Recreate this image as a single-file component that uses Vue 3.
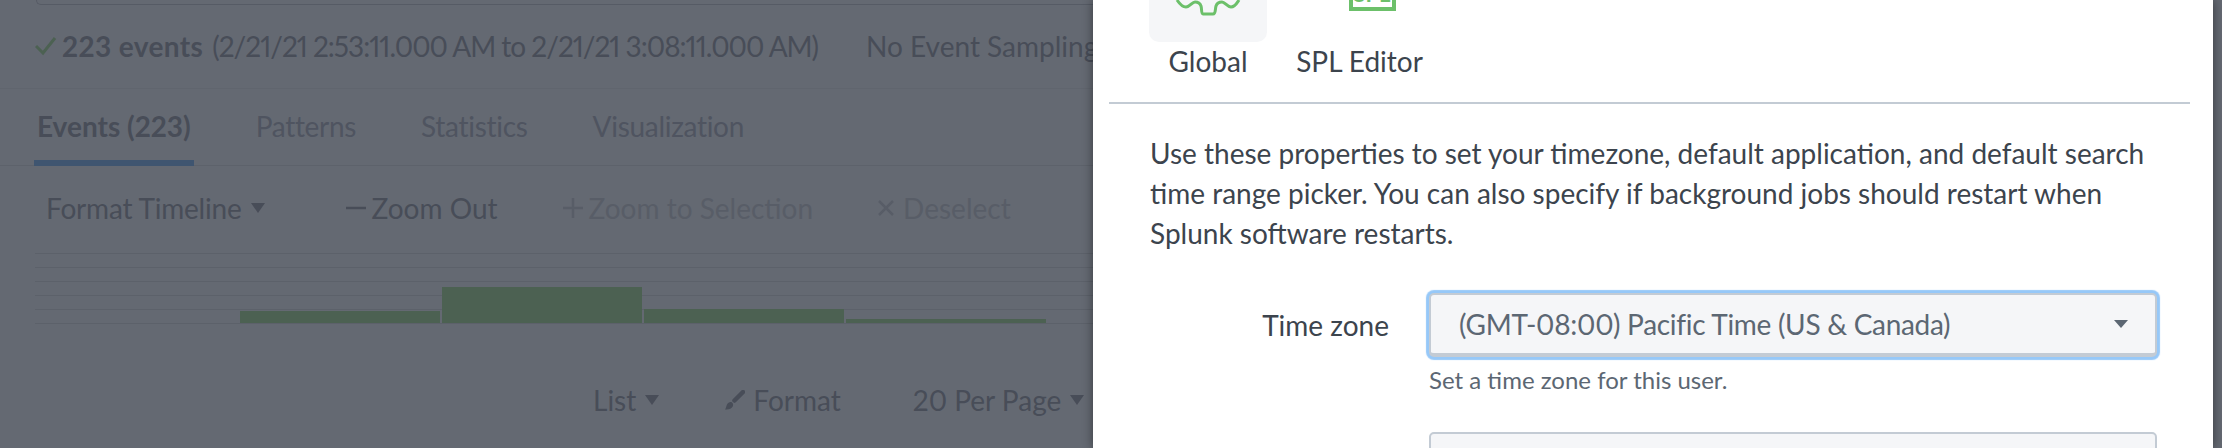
<script setup>
const tabs = [
  { label: 'Events (223)', active: true },
  { label: 'Patterns' },
  { label: 'Statistics' },
  { label: 'Visualization' },
]
// timeline bars, heights in px against the axis
const bars = [12, 36, 14, 4]
const gridlines = [1, 2, 3, 4, 5, 6]
</script>

<template>
  <div class="screen">
    <!-- dimmed search page behind the modal -->
    <div class="page">
      <div class="search-box"></div>

      <div class="status">
        <svg class="check" width="24" height="20" viewBox="0 0 24 20">
          <path d="M1 10l7 7L20 2" fill="none" stroke="#4c6152" stroke-width="3" />
        </svg>
        <span class="count">223 events</span>
        <span class="range">(2/21/21 2:53:11.000 AM to 2/21/21 3:08:11.000 AM)</span>
        <span class="sampling">No Event Sampling</span>
      </div>

      <div class="tabs">
        <div v-for="t in tabs" :key="t.label" class="tab" :class="{ active: t.active }">{{ t.label }}</div>
      </div>

      <div class="toolbar">
        <span class="tool tool-format">Format Timeline<i class="caret"></i></span>
        <span class="tool">
          <svg class="sym" width="20" height="20" viewBox="0 0 20 20"><path d="M0 10h20" stroke="#484d58" stroke-width="2.5" /></svg>
          Zoom Out
        </span>
        <span class="tool off">
          <svg class="sym" width="20" height="20" viewBox="0 0 20 20"><path d="M0 10h20M10 0v20" stroke="#585d67" stroke-width="2.5" /></svg>
          Zoom to Selection
        </span>
        <span class="tool off">
          <svg class="sym sym-x" width="16" height="16" viewBox="0 0 16 16"><path d="M1 1l14 14M15 1L1 15" stroke="#585d67" stroke-width="2.5" /></svg>
          Deselect
        </span>
      </div>

      <div class="timeline">
        <div class="grid">
          <div v-for="g in gridlines" :key="g" class="gridline"></div>
        </div>
        <div class="bars">
          <div v-for="(h, i) in bars" :key="i" class="bar" :style="{ height: h + 'px' }"></div>
        </div>
      </div>

      <div class="results-bar">
        <span class="tool">List<i class="caret"></i></span>
        <span class="tool tool-fmt">
          <svg class="brush" width="20" height="20" viewBox="0 0 20 20">
            <path d="M18 2L9.5 10.5" stroke="#484d58" stroke-width="4.5" stroke-linecap="round" />
            <path d="M0 19.5c1-1 1-3 2-5 1-2 3.500-3 5-2s1.500 3.500 0 5c-2 2-5 2-7 2z" fill="#484d58" />
          </svg>
          Format
        </span>
        <span class="tool">20 Per Page<i class="caret"></i></span>
      </div>
    </div>

    <!-- preferences modal -->
    <div class="modal">
      <div class="pref-tabs">
        <div class="pref-tab">
          <div class="tile">
            <svg width="70" height="18" viewBox="0 0 70 18">
              <path d="M4 0c2 3 5 7 9 7s6-5 9-5 5 1 6 4c1 3 0 8 2 8h10c3 0 2-5 3-8 1-3 3-4 6-4s5 5 9 5 6-4 8-7" fill="none" stroke="#6cc06a" stroke-width="3" />
            </svg>
          </div>
          <span>Global</span>
        </div>
        <div class="pref-tab spl">
          <div class="tile tile-plain">
            <div class="spl-box"><b>SPL</b></div>
          </div>
          <span>SPL Editor</span>
        </div>
      </div>
      <div class="divider"></div>
      <p class="intro">
        Use these properties to set your timezone, default application, and default search
        time range picker. You can also specify if background jobs should restart when
        Splunk software restarts.
      </p>
      <div class="field">
        <label>Time zone</label>
        <div class="control">
          <div class="select">
            <span>(GMT-08:00) Pacific Time (US &amp; Canada)</span>
            <i class="select-caret"></i>
          </div>
          <div class="help">Set a time zone for this user.</div>
          <div class="select next"></div>
        </div>
      </div>
    </div>
  </div>
</template>

<style>
html, body { margin: 0; background: #646972; }
</style>

<style scoped>
.screen {
  position: relative;
  width: 2222px;
  height: 448px;
  overflow: hidden;
  background: #646972;
  font-family: Lato, "Open Sans", sans-serif;
  font-variant-numeric: proportional-nums;
  color: #484d58;
  font-size: 28px;
}

.page {
  width: 1093px;
  white-space: nowrap;
}

.search-box {
  height: 4px;
  margin-left: 36px;
  border: 1px solid #565b65;
  border-top: none;
  border-right: none;
  border-bottom-left-radius: 5px;
}

.status {
  display: flex;
  align-items: center;
  height: 84px;
  padding: 0 0 2px 35px;
  border-bottom: 1px solid #60656e;
  box-sizing: border-box;
}
.check { flex: none; margin-right: 3px; }
.count { font-weight: 700; letter-spacing: 0.4px; margin-right: 9px; }
.range { letter-spacing: -1px; }
.sampling { margin-left: 48px; }

.tabs {
  display: flex;
  gap: 59px;
  height: 77px;
  padding-left: 34px;
  border-bottom: 1px solid #5d626b;
  box-sizing: border-box;
}
.tab {
  height: 77px;
  box-sizing: border-box;
  padding: 19px 3px 0;
  line-height: 36px;
  letter-spacing: -0.3px;
  color: #4f5460;
}
.tab.active {
  font-weight: 700;
  letter-spacing: 0;
  color: #484d58;
  border-bottom: 6px solid #3f5570;
}

.toolbar {
  display: flex;
  align-items: center;
  height: 84px;
  padding-left: 46px;
  gap: 65px;
}
.tool { display: inline-flex; align-items: center; }
.tool.off { color: #585d67; }
.tool-format { letter-spacing: -0.2px; margin-right: 16px; }
.sym { flex: none; margin-right: 6px; }
.sym-x { margin-right: 9px; }

.caret {
  display: inline-block;
  margin-left: 9px;
  border-left: 7px solid transparent;
  border-right: 7px solid transparent;
  border-top: 10px solid #484d58;
}

.timeline {
  position: relative;
  height: 76px;
  margin-left: 35px;
}
.grid {
  display: flex;
  flex-direction: column;
  gap: 13px;
  padding-top: 3px;
}
.gridline { height: 1px; background: #5c616a; }
.bars {
  position: absolute;
  left: 205px;
  top: 0;
  height: 73px;
  display: flex;
  align-items: flex-end;
  gap: 2px;
}
.bar { width: 200px; background: #4c6152; }

.results-bar {
  display: flex;
  align-items: center;
  height: 72px;
  margin-top: 38px;
  padding-left: 593px;
  gap: 64px;
}
.tool-fmt { gap: 8px; margin: 0 8px 0 2px; }

.modal {
  position: absolute;
  left: 1093px;
  top: 0;
  width: 1120px;
  height: 448px;
  background: #fff;
  box-shadow: 0 0 10px rgba(0, 0, 0, 0.45);
  color: #3c444d;
}

.pref-tabs {
  display: flex;
  gap: 30px;
  margin-top: -60px;
  padding-left: 56px;
}
.pref-tab {
  display: flex;
  flex-direction: column;
  align-items: center;
  width: 118px;
  line-height: 38px;
  white-space: nowrap;
}
.pref-tab.spl { width: 125px; }
.tile {
  display: flex;
  align-items: flex-start;
  justify-content: center;
  box-sizing: border-box;
  width: 118px;
  height: 102px;
  padding-top: 60px;
  border-radius: 10px;
  background: #f5f6f8;
}
.tile-plain {
  background: none;
  justify-content: flex-start;
  padding-top: 0;
}
.spl-box {
  box-sizing: border-box;
  width: 47px;
  height: 71px;
  margin-left: 48px;
  border: 4px solid #6cc06a;
  display: flex;
  align-items: flex-end;
  justify-content: center;
  overflow: hidden;
}
.spl-box b {
  font-size: 22px;
  line-height: 18px;
  color: #6cc06a;
  padding-bottom: 4px;
}

.divider {
  height: 2px;
  margin: 22px 23px 0 16px;
  background: #c3cbd4;
}

.intro {
  margin: 29px 40px 0 57px;
  line-height: 40px;
}

.field {
  display: flex;
  margin-top: 40px;
}
.field label {
  box-sizing: border-box;
  width: 296px;
  text-align: right;
  line-height: 64px;
}
.control { width: 728px; margin-left: 40px; }

.select {
  display: flex;
  align-items: center;
  justify-content: space-between;
  box-sizing: border-box;
  height: 64px;
  padding: 0 27px 0 28px;
  letter-spacing: -0.3px;
  background: #f5f6f8;
  color: #5c6773;
  border: 2px solid #c3cbd4;
  border-bottom-width: 4px;
  border-radius: 5px;
  box-shadow: 0 0 1px 3px #96c8f8;
}
.select-caret {
  border-left: 7px solid transparent;
  border-right: 7px solid transparent;
  border-top: 8px solid #5c6773;
}
.select.next {
  margin-top: 37px;
  box-shadow: none;
  border-bottom-width: 2px;
}
.help {
  margin-top: 8px;
  font-size: 24px;
  line-height: 30px;
  color: #5c6773;
}
</style>
